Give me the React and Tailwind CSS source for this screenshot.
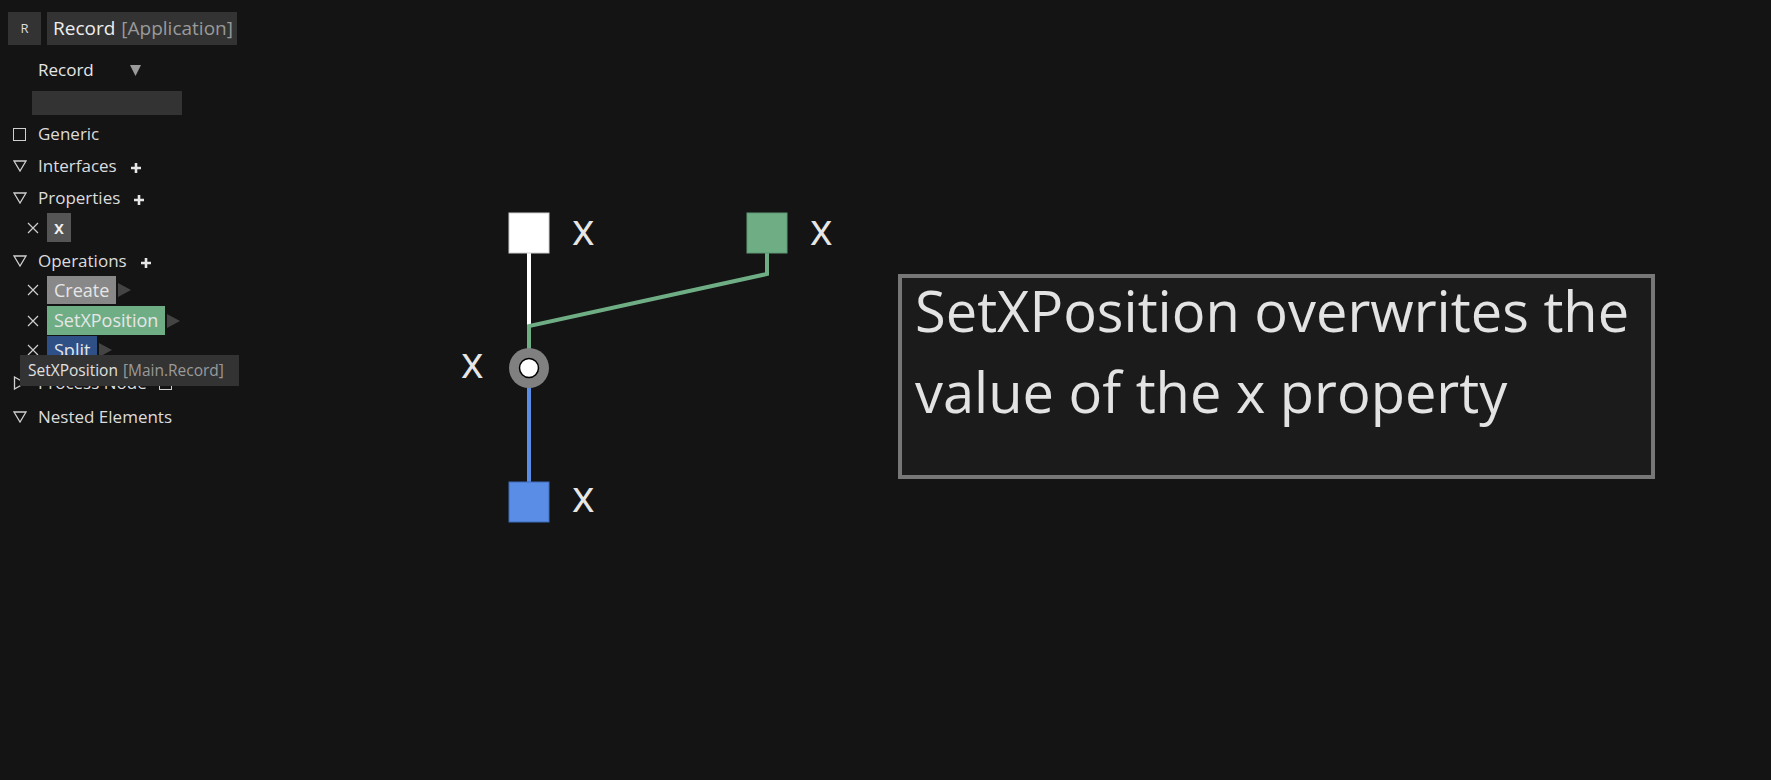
import React from 'react';

const font = { fontFamily: '"Open Sans", "Noto Sans", sans-serif' };

function TriDown() {
  return (
    <svg width="14" height="12" viewBox="0 0 14 12" className="shrink-0">
      <polygon points="1,1 13,1 7,11" fill="none" stroke="#cfcfcf" strokeWidth="1.3" />
    </svg>
  );
}

function TriRight() {
  return (
    <svg width="14" height="14" viewBox="0 0 14 14" className="shrink-0">
      <polygon points="1.5,1 12,7 1.5,13" fill="none" stroke="#cfcfcf" strokeWidth="1.3" />
    </svg>
  );
}

function Box() {
  return <div className="w-[13px] h-[13px] border-[1.5px] border-[#cfcfcf] shrink-0" />;
}

function Plus() {
  return (
    <svg width="10" height="10" viewBox="0 0 10 10" className="shrink-0 mt-[4px]">
      <path d="M5 0V10M0 5H10" stroke="#e6e6e6" strokeWidth="2.6" />
    </svg>
  );
}

function Cross() {
  return (
    <svg width="12" height="12" viewBox="0 0 12 12" className="shrink-0">
      <path d="M1 1L11 11M11 1L1 11" stroke="#cfcfcf" strokeWidth="1.2" />
    </svg>
  );
}

function Arrow() {
  return (
    <svg width="13" height="14" viewBox="0 0 13 14" className="shrink-0 ml-[2px]">
      <polygon points="0,0 13,7 0,14" fill="#444" />
    </svg>
  );
}

function Section({ icon, label, plus, h, extra }) {
  return (
    <div className={`flex items-center pl-[13px] ${h}`}>
      <div className="w-[25px] flex items-center">{icon}</div>
      <span className="text-[17px] text-[#dcdcdc]">{label}</span>
      {plus && <div className="ml-[14px] flex">{<Plus />}</div>}
      {extra}
    </div>
  );
}

function Item({ label, bg, arrow, text = 'text-[#e6e6e6]', h = 'h-[30px]', boxH = 'h-[29px]' }) {
  return (
    <div className={`flex items-start pl-[27px] ${h}`}>
      <div className={`flex items-center ${boxH}`}>
        <Cross />
      </div>
      <div className={`ml-[8px] px-[7px] ${boxH} flex items-center text-[18px] ${bg} ${text}`}>{label}</div>
      {arrow && (
        <div className={`flex items-center ${boxH}`}>
          <Arrow />
        </div>
      )}
    </div>
  );
}

function Diagram() {
  const green = '#6fae85';
  const blue = '#5a8de6';
  return (
    <svg width="420" height="360" viewBox="440 190 420 360" className="absolute left-[440px] top-[190px]">
      <line x1="529" y1="252" x2="529" y2="328" stroke="#ffffff" strokeWidth="4" />
      <path d="M767 252 V274 L529 326 V350" fill="none" stroke={green} strokeWidth="4" />
      <line x1="529" y1="386" x2="529" y2="483" stroke={blue} strokeWidth="4" />
      <rect x="509" y="213" width="40" height="40" fill="#ffffff" stroke="#cfcfcf" strokeWidth="1" />
      <rect x="747" y="213" width="40" height="40" fill={green} stroke="#5f9874" strokeWidth="1" />
      <rect x="509" y="482" width="40" height="40" fill={blue} stroke="#3e6ab8" strokeWidth="1" />
      <circle cx="529" cy="368" r="20" fill="#808080" />
      <circle cx="529" cy="368" r="9.5" fill="#ffffff" stroke="#000" strokeWidth="1.5" />
      <g fill="#e6e6e6" fontSize="43" style={font}>
        <text x="572" y="245">x</text>
        <text x="810" y="245">x</text>
        <text x="461" y="378">x</text>
        <text x="572" y="512">x</text>
      </g>
    </svg>
  );
}

export default function App() {
  return (
    <div className="w-[1771px] h-[780px] bg-[#141414] flex overflow-hidden text-[#dcdcdc]" style={font}>
      {/* Left panel */}
      <div className="relative w-[250px] shrink-0 pt-[12px]">
        <div className="flex gap-[6px] pl-[8px]">
          <div className="w-[33px] h-[33px] bg-[#333] flex items-center justify-center text-[13px] text-[#ddd]">R</div>
          <div className="w-[190px] h-[33px] bg-[#333] px-[6px] flex items-center text-[19px] whitespace-nowrap">
            <span className="text-[#eee]">Record</span>
            <span className="ml-[6px] text-[#9a9a9a]">[Application]</span>
          </div>
        </div>

        <div className="flex items-center h-[46px] pt-[4px] pl-[38px]">
          <span className="text-[17px] text-[#e6e6e6] w-[92px]">Record</span>
          <svg width="11" height="11" viewBox="0 0 11 11">
            <polygon points="0,0 11,0 5.5,11" fill="#9a9a9a" />
          </svg>
        </div>
        <div className="ml-[32px] w-[150px] h-[24px] bg-[#333]" />

        <div className="mt-[3px]">
          <Section icon={<Box />} label="Generic" h="h-[32px]" />
          <Section icon={<TriDown />} label="Interfaces" plus h="h-[32px]" />
          <Section icon={<TriDown />} label="Properties" plus h="h-[31px]" />
          <Item label={<span className="font-semibold">x</span>} bg="bg-[#555]" text="text-[#f0f0f0]" boxH="h-[29px]" />
          <Section icon={<TriDown />} label="Operations" plus h="h-[33px] pt-[2px]" />
          <Item label="Create" bg="bg-[#888]" arrow boxH="h-[28px]" />
          <Item label="SetXPosition" bg="bg-[#6fae85]" arrow />
          <Item label="Split" bg="bg-[#2e5087]" arrow boxH="h-[28px]" />
          <Section
            icon={<TriRight />}
            label="Process Node"
            h="h-[34px]"
            extra={<div className="ml-[12px]"><Box /></div>}
          />
          <Section icon={<TriDown />} label="Nested Elements" h="h-[34px]" />
        </div>

        {/* Tooltip */}
        <div className="absolute left-[20px] top-[355px] w-[219px] h-[31px] bg-[#333] flex items-center pl-[8px] text-[15.5px] whitespace-nowrap z-10">
          <span className="text-[#e0e0e0]">SetXPosition</span>
          <span className="ml-[5px] text-[#9a9a9a]">[Main.Record]</span>
        </div>
      </div>

      {/* Canvas */}
      <div className="relative flex-1">
        <div className="absolute left-[-250px] top-0 w-[1771px] h-[780px]">
          <Diagram />
          <div className="absolute left-[898px] top-[274px] w-[757px] h-[205px] border-4 border-[#777] bg-[#1b1b1b] pl-[13px]">
            <p className="text-[56px] leading-[81px] text-[#e3e3e3] -mt-[8px]">
              SetXPosition overwrites the value of the x property
            </p>
          </div>
        </div>
      </div>
    </div>
  );
}
